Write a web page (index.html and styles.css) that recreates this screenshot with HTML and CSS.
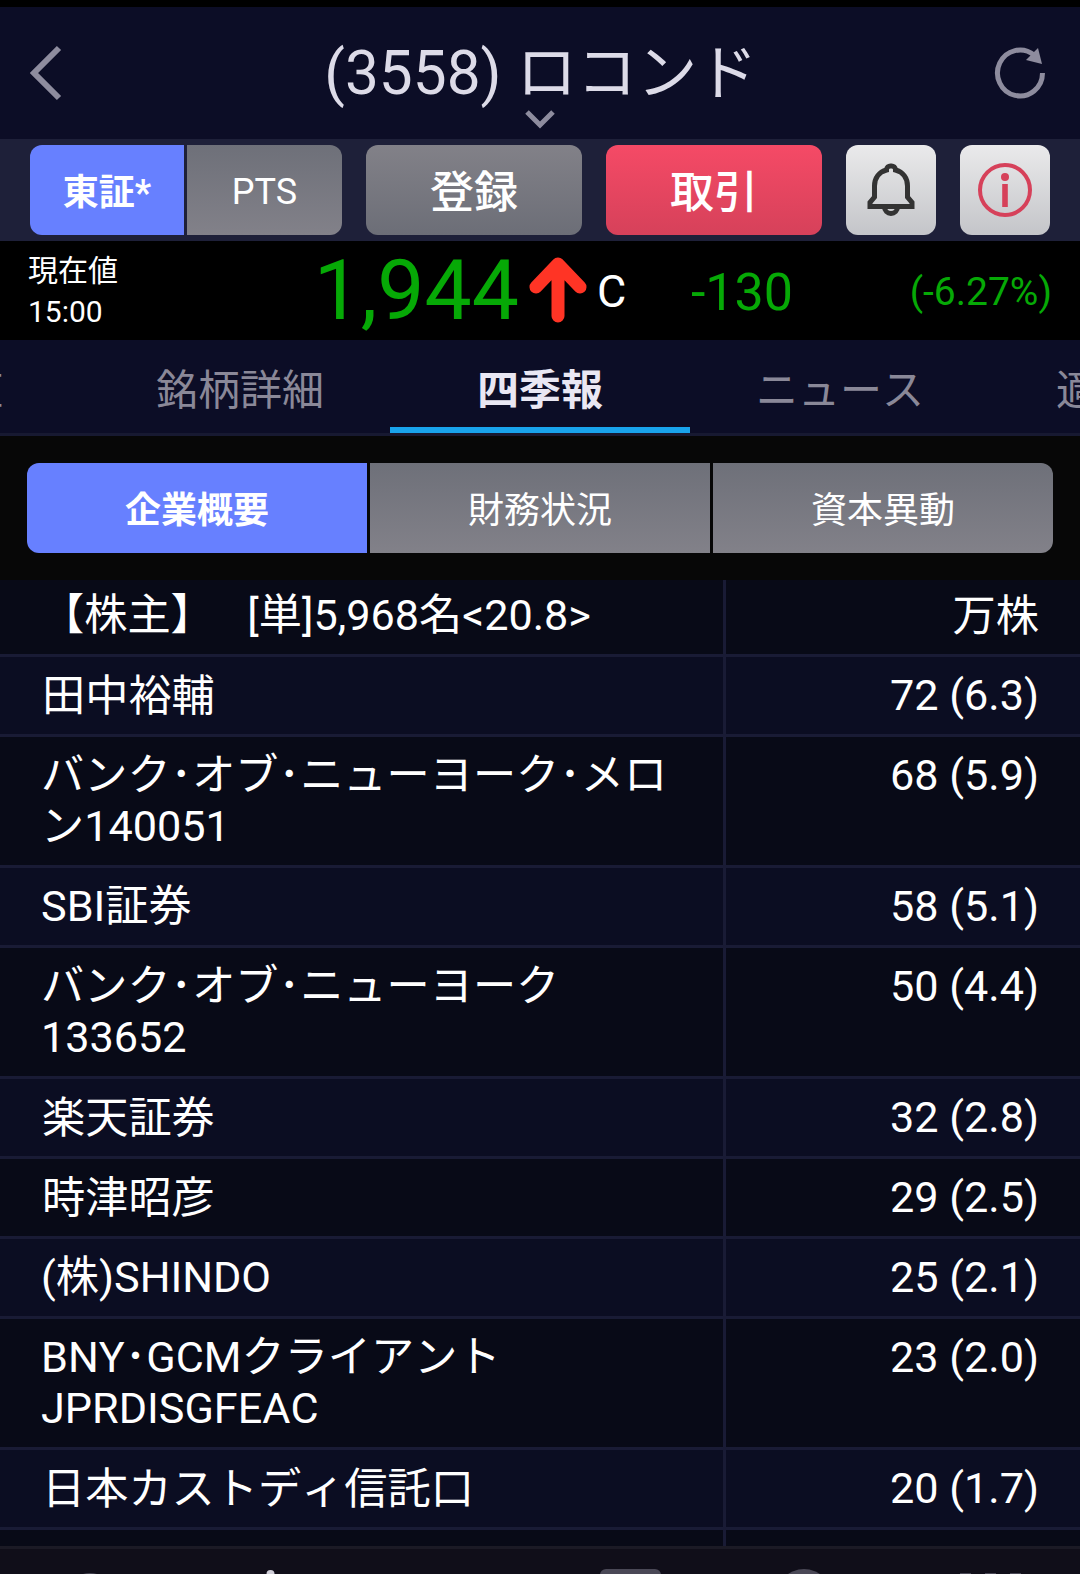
FILE: index.html
```html
<!DOCTYPE html>
<html lang="ja">
<head>
    <meta charset="UTF-8" />
    <meta name="viewport" content="width=device-width, initial-scale=1.0" />
    <title>(3558) ロコンド</title>
    <link rel="stylesheet" href="styles.css">
</head>
<body>

    <header class="header">
        <svg class="back" width="32" height="56" viewBox="0 0 32 56"><path d="M29 3 L4 28 L29 53" /></svg>
        <h1>(3558) ロコンド</h1>
        <svg class="reload" width="54" height="54" viewBox="0 0 54 54">
            <path class="ring" d="M49.500 27 A22.500 23 0 1 1 41 9" />
            <path class="head" d="M45 2 L49 18 L33 14 Z" />
        </svg>
        <svg class="open" width="30" height="20" viewBox="0 0 30 20"><path d="M2 3 L15 16 L28 3" /></svg>
    </header>

    <div class="toolbar">
        <div class="market">
            <button class="seg active">東証*</button>
            <button class="seg pts">PTS</button>
        </div>
        <button class="btn gray">登録</button>
        <button class="btn red">取引</button>
        <button class="btn icon">
            <svg width="48" height="56" viewBox="0 1 48 56">
                <path d="M24 5 a4 4 0 0 0 -4.500 4 C12 11 7.500 17 7.500 25 V36 L3 41.500 V45.500 H45 V41.500 L40.500 36 V25 C40.500 17 36 11 28.500 9 A4 4 0 0 0 24 5 Z" />
                <path d="M17.500 46 a6.500 6.500 0 0 0 13 0" />
            </svg>
        </button>
        <button class="btn icon info">
            <svg width="56" height="56" viewBox="0 0 56 56">
                <circle cx="28" cy="28" r="25" />
                <circle class="fill" cx="28" cy="15" r="4" />
                <rect class="fill" x="25.200" y="22" width="5.600" height="23" />
            </svg>
        </button>
    </div>

    <div class="price">
        <div class="label">現在値<br>15:00</div>
        <div class="now">1,944</div>
        <svg class="arrow" width="58" height="68" viewBox="0 0 58 68"><path d="M29 59 V8 M7 30 L29 7 L51 30" /></svg>
        <div class="close">C</div>
        <div class="diff">-130</div>
        <div class="rate">(-6.27%)</div>
    </div>

    <nav class="tabs">
        <a class="tab">気配値</a>
        <a class="tab">銘柄詳細</a>
        <a class="tab active">四季報</a>
        <a class="tab">ニュース</a>
        <a class="tab">適時開示</a>
    </nav>

    <div class="segments">
        <button class="seg active">企業概要</button>
        <button class="seg">財務状況</button>
        <button class="seg">資本異動</button>
    </div>

    <main class="holders">
        <div class="row head"><div class="name">【株主】　<span class="count">[単]5,968名&lt;20.8&gt;</span></div><div class="num">万株</div></div>
        <div class="row"><div class="name jp">田中裕輔</div><div class="num">72 (6.3)</div></div>
        <div class="row"><div class="name">バンク･オブ･ニューヨーク･メロ<br>ン140051</div><div class="num">68 (5.9)</div></div>
        <div class="row"><div class="name">SBI証券</div><div class="num">58 (5.1)</div></div>
        <div class="row"><div class="name">バンク･オブ･ニューヨーク<br>133652</div><div class="num">50 (4.4)</div></div>
        <div class="row"><div class="name jp">楽天証券</div><div class="num">32 (2.8)</div></div>
        <div class="row"><div class="name jp">時津昭彦</div><div class="num">29 (2.5)</div></div>
        <div class="row"><div class="name">(株)SHINDO</div><div class="num">25 (2.1)</div></div>
        <div class="row"><div class="name">BNY･GCMクライアント<br>JPRDISGFEAC</div><div class="num">23 (2.0)</div></div>
        <div class="row"><div class="name jp">日本カストディ信託口</div><div class="num">20 (1.7)</div></div>
        <div class="row"><div class="name"></div><div class="num"></div></div>
    </main>

    <footer class="bottom">
        <svg width="1080" height="25" viewBox="0 0 1080 25">
            <circle cx="90" cy="49" r="25" />
            <circle class="light" cx="270.500" cy="25" r="4" />
            <rect x="600" y="20" width="61" height="40" rx="6" />
            <circle cx="804" cy="48" r="28" />
            <path d="M960 24 h11 v4 h-11 Z M985 24 h11 v4 h-11 Z M1010 24 h11 v4 h-11 Z" />
        </svg>
    </footer>

</body>
</html>
```
FILE: styles.css
```css
* {
    box-sizing: border-box;
}

body {
    margin: 0;
    height: 1574px;
    display: flex;
    flex-direction: column;
    overflow: hidden;
    background: #000;
    color: #fff;
    font-family: Roboto, "Noto Sans CJK JP", sans-serif;
    font-kerning: none;
}

svg {
    display: block;
    fill: none;
}

button {
    padding: 0;
    border: none;
    color: #fff;
    font-family: inherit;
}

/* title bar */
.header {
    position: relative;
    flex: none;
    display: flex;
    align-items: center;
    justify-content: space-between;
    height: 132px;
    margin-top: 7px;
    padding: 0 33px 0 30px;
    background: #0c0d26;
}

.header h1 {
    margin: 0;
    padding: 1px 0 0 27px;
    color: #dddbe8;
    font-size: 60.300px;
    font-weight: 400;
    line-height: 131px;
}

.back, .open {
    stroke: #8e8c9e;
    stroke-width: 6;
}

.open {
    position: absolute;
    left: 525px;
    top: 102px;
    stroke-width: 5;
}

.ring {
    stroke: #8e8c9e;
    stroke-width: 5;
}

.reload .head {
    fill: #8e8c9e;
}

/* buttons */
.toolbar {
    flex: none;
    display: flex;
    gap: 24px;
    height: 102px;
    padding: 6px 30px;
    background: #1e2039;
}

.market, .segments {
    display: flex;
    gap: 3px;
}

.market {
    width: 312px;
}

.seg {
    flex: 1;
    height: 90px;
    padding-bottom: 2px;
    background: linear-gradient(#6e7079, #828189);
    font-size: 36px;
}

.market .active {
    flex: none;
    width: 154px;
}

.seg.pts {
    padding: 3px 0 0;
}

.seg:first-child {
    border-radius: 12px 0 0 12px;
}

.seg:last-child {
    border-radius: 0 12px 12px 0;
}

.seg.active {
    background: #6780ff;
    font-weight: bold;
}

.btn {
    display: flex;
    align-items: center;
    justify-content: center;
    width: 216px;
    height: 90px;
    padding-bottom: 3px;
    border-radius: 12px;
    font-size: 44px;
    font-weight: 500;
}

.gray {
    background: linear-gradient(#828188, #6c6e77);
}

.red {
    background: linear-gradient(#f54a66, #d6415a);
}

.icon {
    width: 90px;
    padding: 0;
    background: linear-gradient(#eaeaeb, #c4c5c9);
    stroke: #333;
    stroke-width: 5;
}

.info {
    stroke: #d6415a;
    stroke-width: 4;
}

.fill {
    fill: #d6415a;
    stroke: none;
}

/* current price */
.price {
    flex: none;
    display: flex;
    align-items: center;
    height: 99px;
    padding: 0 28px;
    background: #000;
    color: #06a906;
}

.label {
    width: 200px;
    color: #fff;
    font-size: 30px;
    line-height: 41px;
}

.now {
    width: 291px;
    font-size: 84px;
    line-height: 99px;
    text-align: right;
}

.arrow {
    margin-left: 10px;
    stroke: #ff3425;
    stroke-width: 13;
    stroke-linecap: round;
    stroke-linejoin: round;
}

.close {
    width: 40px;
    margin-left: 10px;
    padding-top: 2px;
    color: #fff;
    font-size: 45px;
}

.diff {
    width: 156px;
    padding-top: 4px;
    font-size: 52px;
    text-align: right;
}

.rate {
    flex: 1;
    padding-top: 3px;
    font-size: 39px;
    text-align: right;
}

/* page tabs */
.tabs {
    flex: none;
    display: flex;
    height: 96px;
    overflow: hidden;
    border-bottom: 3px solid #171931;
    background: #0c0d26;
}

.tab {
    flex: none;
    width: 300px;
    height: 93px;
    border-bottom: 6px solid transparent;
    color: #8a8898;
    font-size: 42px;
    line-height: 101px;
    text-align: center;
}

.tab:first-child {
    margin-left: -210px;
}

.tab.active {
    border-color: #19a3ec;
    color: #e9e7f3;
    font-weight: bold;
}

.segments {
    flex: none;
    padding: 27px;
    background: #070707;
}

/* shareholder list */
.holders {
    flex: 1;
    min-height: 0;
    overflow: hidden;
}

.row {
    display: flex;
    min-height: 80px;
    border-bottom: 3px solid #191b35;
    background: #080a17;
    font-size: 43.200px;
    line-height: 51px;
}

.row:nth-child(even) {
    background: #0b0d22;
}

.row.head {
    min-height: 77px;
}

.name {
    width: 726px;
    padding: 13px 0 13px 41px;
    border-right: 3px solid #191b35;
}

.name.jp {
    padding: 14px 0 12px 42px;
}

.num {
    flex: 1;
    padding: 13px 41px 13px 0;
    text-align: right;
}

.head .name, .head .num {
    padding-top: 10px;
}

.head .num {
    padding-top: 11px;
    padding-bottom: 12px;
}

.count {
    margin-left: 12px;
}

.bottom {
    flex: none;
    height: 28px;
    border-top: 3px solid #1b1a25;
    background: #100e19;
}

.bottom svg {
    fill: #4a4856;
}

.bottom .light {
    fill: #d0ced8;
}
```
